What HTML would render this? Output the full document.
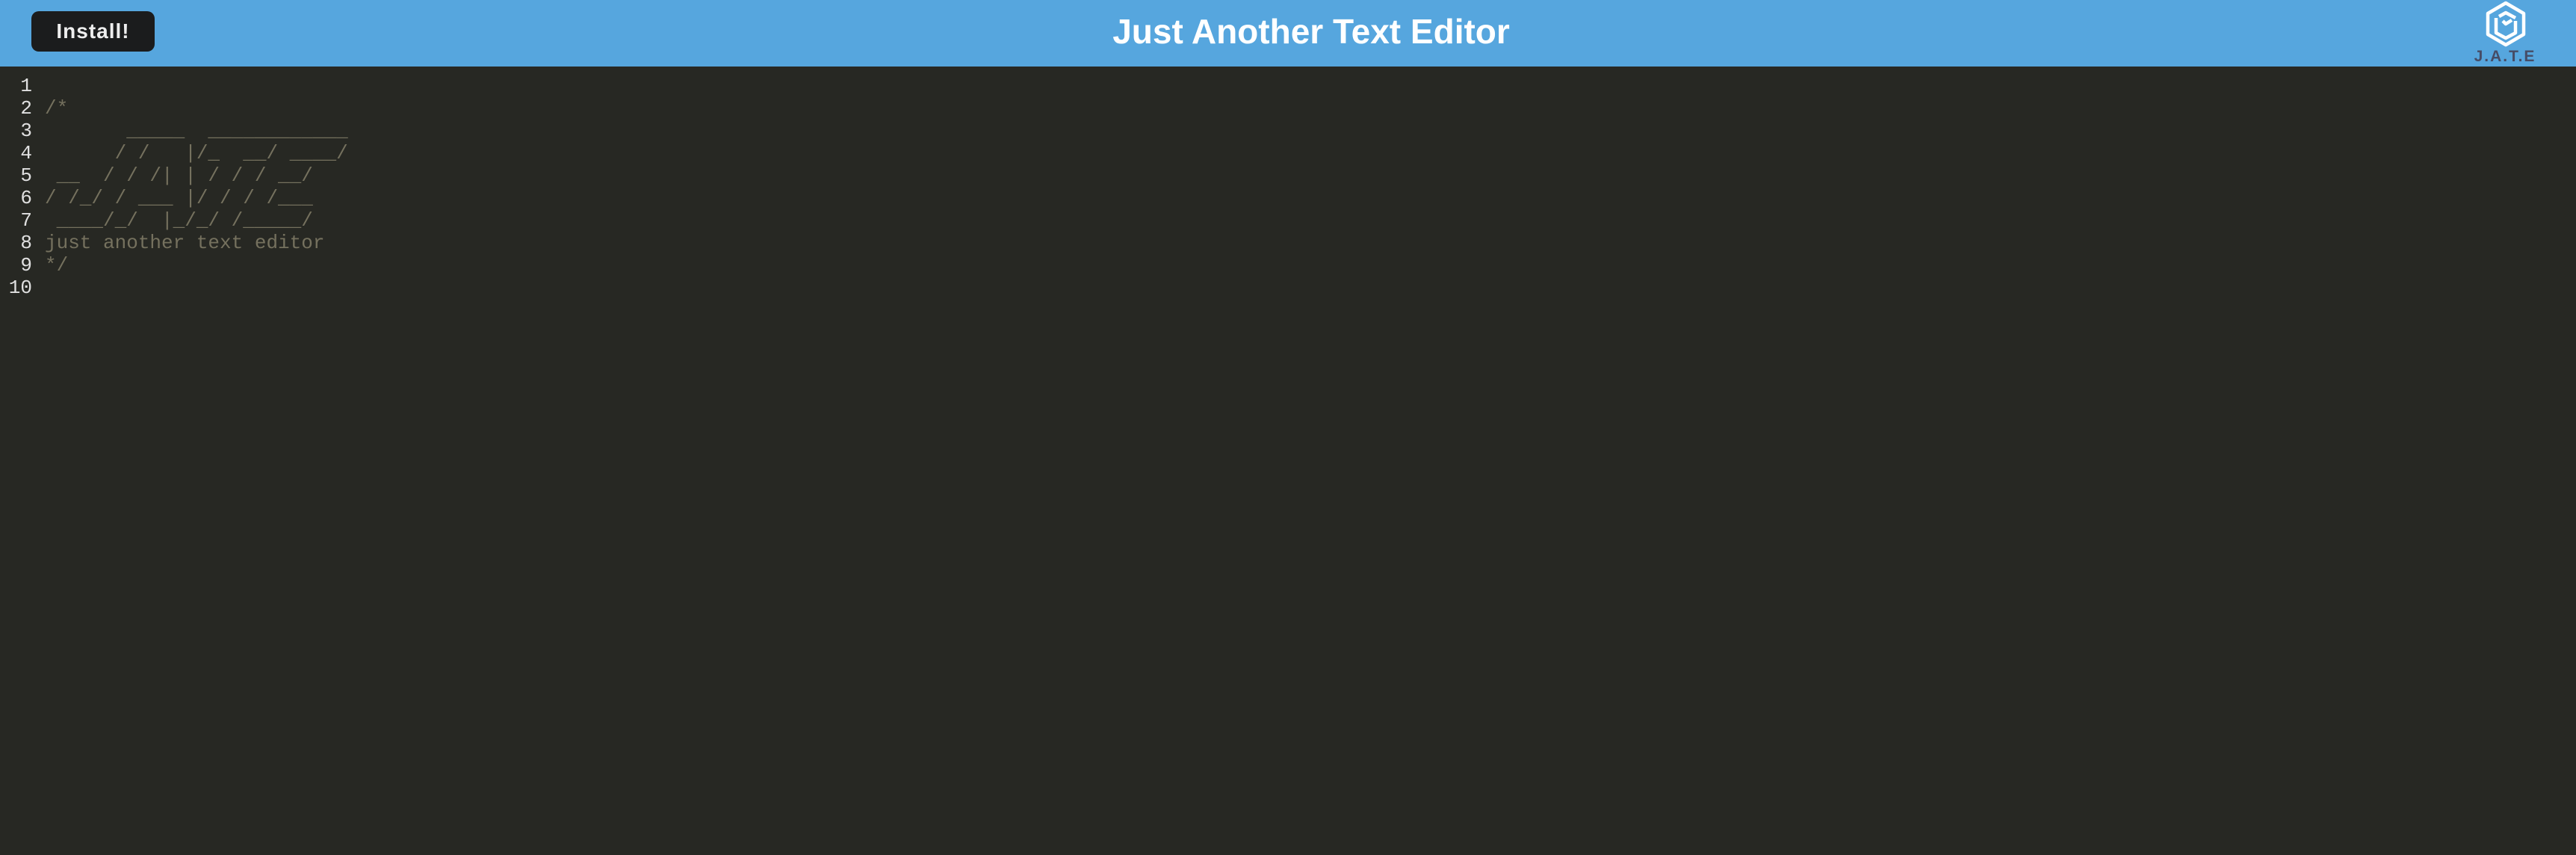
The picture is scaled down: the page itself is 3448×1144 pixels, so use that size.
<!DOCTYPE html>
<html><head><meta charset="utf-8"><style>
html,body{margin:0;padding:0;width:3448px;height:1144px;background:#272823;overflow:hidden}
.hdr{position:absolute;left:0;top:0;width:3448px;height:89px;background:#56a6de}
.btn{position:absolute;left:42px;top:15px;width:165px;height:54px;background:#1b1c1d;border-radius:10px;color:#eee;font:bold 28px "Liberation Sans",sans-serif;text-align:center;line-height:54px;letter-spacing:1px}
.title{position:absolute;left:0;width:3510px;top:12px;text-align:center;color:#fff;font:bold 46px "Liberation Sans",sans-serif;line-height:60px}
.logo{position:absolute;left:3318px;top:0px}
.logot{position:absolute;left:3308px;top:64px;width:90px;text-align:center;font:bold 21px "Liberation Sans",sans-serif;color:#464c66;letter-spacing:2px}
.ed{position:absolute;top:100px;left:0;font:26px/30px "Liberation Mono","DejaVu Sans Mono",monospace}
.gut{position:absolute;left:0;width:43px;text-align:right;color:#e0e0e0}
.code{position:absolute;left:60px;color:#75715e;white-space:pre}
</style></head><body>
<div class="hdr"></div>
<div class="btn">Install!</div>
<div class="title">Just Another Text Editor</div>
<svg class="logo" width="72" height="64" viewBox="0 0 72 64"><g fill="none" stroke="#fff" stroke-width="4.5" stroke-linejoin="round"><path d="M36 4 L60 18 L60 46 L36 60 L12 46 L12 18 Z"/><path d="M23 24 L23 44 L36 51 L49 44 L49 28 M49 24 L36 17 L27 22 M32 28 L36 32 L44 27"/></g></svg>
<div class="logot">J.A.T.E</div>
<div class="ed">
<div class="gut">1<br>2<br>3<br>4<br>5<br>6<br>7<br>8<br>9<br>10</div>
<div class="code">
/*
       _____  ____________
      / /   |/_  __/ ____/
 __  / / /| | / / / __/
/ /_/ / ___ |/ / / /___
 ____/_/  |_/_/ /_____/
just another text editor
*/
</div></div>
</body></html>
